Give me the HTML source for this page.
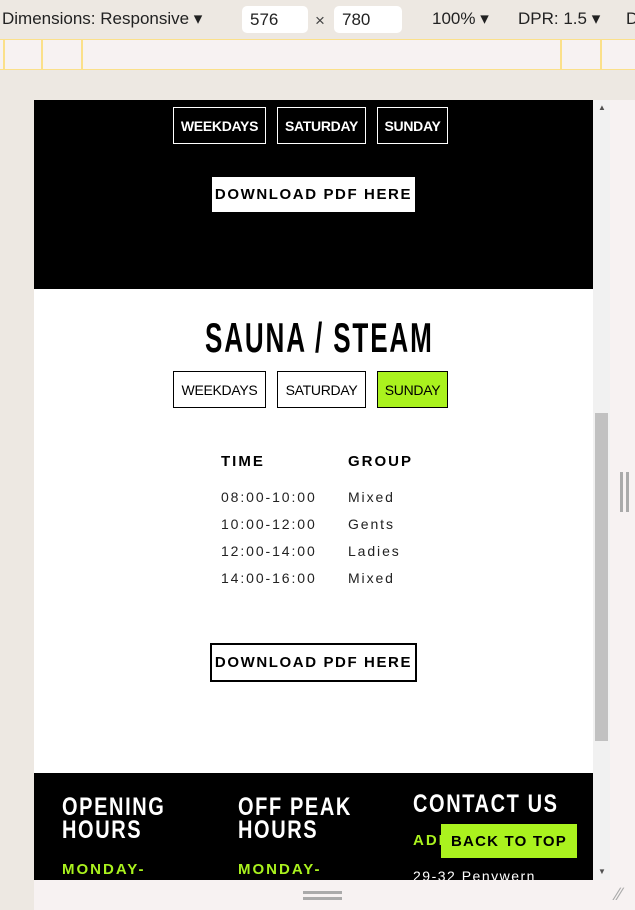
<!DOCTYPE html>
<html><head><meta charset="utf-8">
<style>
*{margin:0;padding:0;box-sizing:border-box}
body{width:635px;height:910px;position:relative;overflow:hidden;background:#ede8e2;font-family:"Liberation Sans",sans-serif}
.a{position:absolute}
.btn{position:absolute;border:1px solid #fff;color:#fff;font-size:14px;font-weight:bold;display:flex;align-items:center;justify-content:center;letter-spacing:-0.3px}
.btn.d{border-color:#000;color:#000;font-weight:normal}
.cond{display:inline-block;transform:scaleX(0.72);transform-origin:left center;white-space:nowrap}
.tx{position:absolute;font-size:14px;letter-spacing:1.9px;color:#222}
.hd{position:absolute;font-size:15px;font-weight:bold;letter-spacing:2px;color:#000}
.fh{position:absolute;color:#fff;font-weight:bold;font-size:25px;line-height:23px;letter-spacing:2px}
.g{position:absolute;color:#aaf21e;font-weight:bold;font-size:15px;letter-spacing:2px}
.dl{white-space:nowrap;font-weight:bold;font-size:15px;letter-spacing:1.6px;display:flex;align-items:center;justify-content:center}
</style></head><body>
<div class="a" style="left:2px;top:9px;font-size:17px;color:#222">Dimensions: Responsive ▾</div>
<div class="a" style="left:242px;top:6px;width:66px;height:27px;background:#fff;border-radius:5px;font-size:17px;padding:4px 0 0 8px;color:#222">576</div>
<div class="a" style="left:315px;top:11px;font-size:17px;color:#444">×</div>
<div class="a" style="left:334px;top:6px;width:68px;height:27px;background:#fff;border-radius:5px;font-size:17px;padding:4px 0 0 8px;color:#222">780</div>
<div class="a" style="left:432px;top:9px;font-size:17px;color:#222">100% ▾</div>
<div class="a" style="left:518px;top:9px;font-size:17px;color:#222">DPR: 1.5 ▾</div>
<div class="a" style="left:626px;top:9px;font-size:17px;color:#222">D</div>
<div class="a" style="left:0;top:39px;width:635px;height:31px;background:#f7f2f2;border-top:1px solid #fbe08a;border-bottom:1px solid #fbe08a"></div>
<div class="a" style="left:3px;top:39px;width:2px;height:30px;background:#fbe08a"></div>
<div class="a" style="left:41px;top:39px;width:2px;height:30px;background:#fbe08a"></div>
<div class="a" style="left:81px;top:39px;width:2px;height:30px;background:#fbe08a"></div>
<div class="a" style="left:560px;top:39px;width:2px;height:30px;background:#fbe08a"></div>
<div class="a" style="left:600px;top:39px;width:2px;height:30px;background:#fbe08a"></div>
<div class="a" style="left:610px;top:100px;width:25px;height:810px;background:#f7f2f2"></div>
<div class="a" style="left:34px;top:880px;width:601px;height:30px;background:#f7f2f2"></div>
<div class="a" style="left:303px;top:891px;width:39px;height:3px;background:#aaa"></div>
<div class="a" style="left:303px;top:897px;width:39px;height:3px;background:#aaa"></div>
<div class="a" style="left:620px;top:472px;width:3px;height:40px;background:#aaa"></div>
<div class="a" style="left:626px;top:472px;width:3px;height:40px;background:#aaa"></div>
<div class="a" style="left:616px;top:884px;font-size:18px;color:#aaa">∕∕</div>
<div class="a" style="left:593px;top:100px;width:17px;height:780px;background:#f1f1f1"></div>
<div class="a" style="left:595px;top:413px;width:13px;height:328px;background:#c1c1c1"></div>
<div class="a" style="left:598px;top:103px;font-size:8px;color:#505050">▲</div>
<div class="a" style="left:598px;top:867px;font-size:8px;color:#505050">▼</div>
<div class="a" style="left:34px;top:100px;width:559px;height:189px;background:#000"></div>
<div class="btn" style="left:173px;top:107px;width:93px;height:37px">WEEKDAYS</div>
<div class="btn" style="left:277px;top:107px;width:89px;height:37px">SATURDAY</div>
<div class="btn" style="left:377px;top:107px;width:71px;height:37px">SUNDAY</div>
<div class="a dl" style="left:212px;top:177px;width:203px;height:35px;background:#fff">DOWNLOAD PDF HERE</div>
<div class="a" style="left:34px;top:289px;width:559px;height:484px;background:#fff"></div>
<div class="a" style="left:205px;top:314px;font-size:42px;font-weight:bold;letter-spacing:3px;color:#000"><span class="cond" style="transform:scaleX(0.62)">SAUNA / STEAM</span></div>
<div class="btn d" style="left:173px;top:371px;width:93px;height:37px">WEEKDAYS</div>
<div class="btn d" style="left:277px;top:371px;width:89px;height:37px">SATURDAY</div>
<div class="btn d" style="left:377px;top:371px;width:71px;height:37px;background:#aaf21e">SUNDAY</div>
<div class="hd" style="left:221px;top:453px">TIME</div>
<div class="hd" style="left:348px;top:453px">GROUP</div>
<div class="tx" style="left:221px;top:489px">08:00-10:00</div><div class="tx" style="left:348px;top:489px">Mixed</div>
<div class="tx" style="left:221px;top:516px">10:00-12:00</div><div class="tx" style="left:348px;top:516px">Gents</div>
<div class="tx" style="left:221px;top:543px">12:00-14:00</div><div class="tx" style="left:348px;top:543px">Ladies</div>
<div class="tx" style="left:221px;top:570px">14:00-16:00</div><div class="tx" style="left:348px;top:570px">Mixed</div>
<div class="a dl" style="left:210px;top:643px;width:207px;height:39px;border:2px solid #000">DOWNLOAD PDF HERE</div>
<div class="a" style="left:34px;top:773px;width:559px;height:107px;background:#000;overflow:hidden">
<div class="fh" style="left:28px;top:23px"><span class="cond" style="transform:scaleX(0.8)">OPENING<br>HOURS</span></div>
<div class="fh" style="left:204px;top:23px"><span class="cond" style="transform:scaleX(0.8)">OFF PEAK<br>HOURS</span></div>
<div class="fh" style="left:379px;top:20px"><span class="cond" style="transform:scaleX(0.8)">CONTACT US</span></div>
<div class="g" style="left:28px;top:88px">MONDAY-</div>
<div class="g" style="left:204px;top:88px">MONDAY-</div>
<div class="g" style="left:379px;top:59px">ADDRESS</div>
<div class="a" style="left:379px;top:95px;color:#fff;font-size:14px;letter-spacing:1.5px">29-32 Penywern</div>
<div class="a" style="left:407px;top:51px;width:136px;height:34px;background:#aaf21e;display:flex;align-items:center;justify-content:center;font-weight:bold;font-size:15px;letter-spacing:1.2px;white-space:nowrap">BACK TO TOP</div>
</div>
</body></html>
